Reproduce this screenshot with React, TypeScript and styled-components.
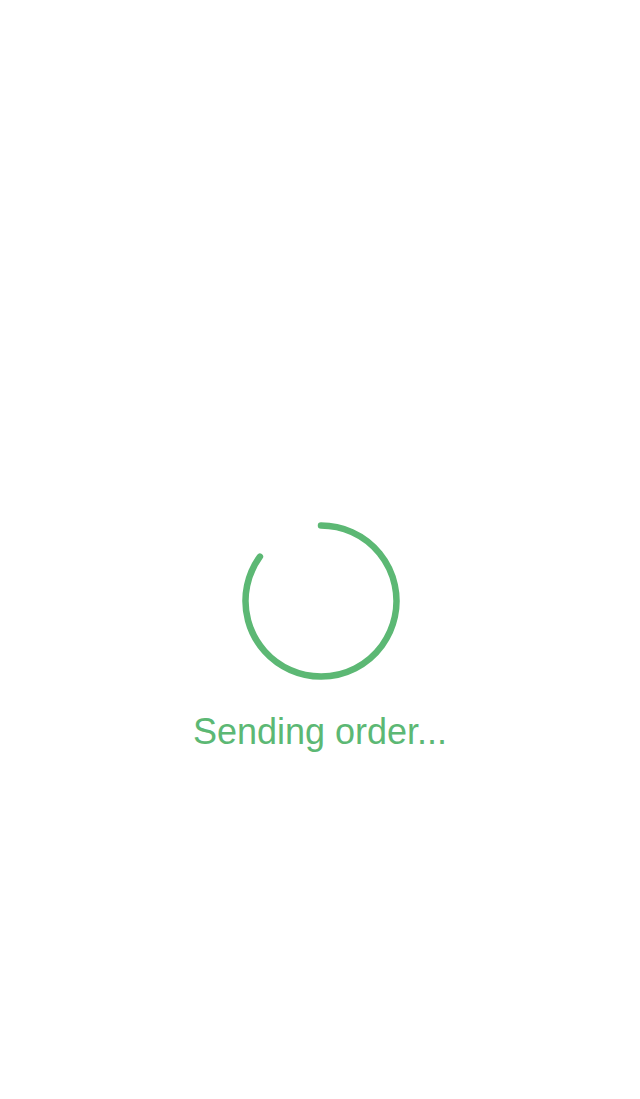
import React from "react";
import styled, { createGlobalStyle } from "styled-components";

const Global = createGlobalStyle`
  html, body { margin: 0; padding: 0; background: #ffffff; }
  #root { min-height: 100vh; }
`;

const Screen = styled.div`
  height: 1099px;
  display: flex;
  flex-direction: column;
  align-items: center;
  justify-content: flex-start;
  padding-top: 521px;
  box-sizing: border-box;
`;

const Spinner = styled.svg`
  width: 160px;
  height: 160px;
  display: block;
  margin-left: 2px;
`;

const Label = styled.div`
  margin-top: 30px;
  font-family: "Liberation Sans", Arial, sans-serif;
  font-size: 36px;
  line-height: 42px;
  color: #5cb874;
`;

export default function App() {
  const cx = 80, cy = 80, r = 75.5;
  const a0 = -90, a1 = 216;
  const p = (a: number) => [cx + r * Math.cos((a * Math.PI) / 180), cy + r * Math.sin((a * Math.PI) / 180)];
  const [x0, y0] = p(a0);
  const [x1, y1] = p(a1);
  return (
    <>
      <Global />
      <Screen>
        <Spinner viewBox="0 0 160 160">
          <path
            d={`M ${x0} ${y0} A ${r} ${r} 0 1 1 ${x1} ${y1}`}
            fill="none"
            stroke="#5cb874"
            strokeWidth={6.5}
            strokeLinecap="round"
          />
        </Spinner>
        <Label>Sending order...</Label>
      </Screen>
    </>
  );
}
